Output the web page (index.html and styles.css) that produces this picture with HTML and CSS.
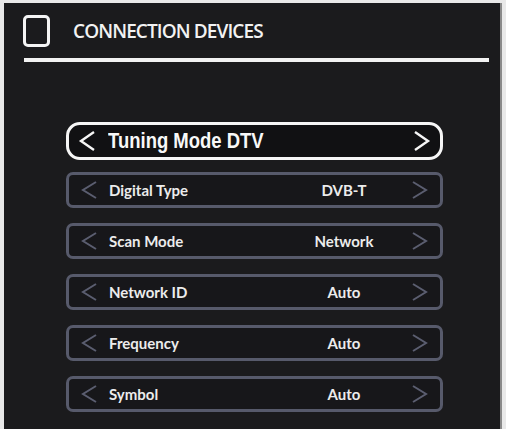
FILE: index.html
```html
<!DOCTYPE html>
<html>
  <head>
    <meta charset="utf-8" />
    <title>Connection Devices</title>
    <link rel="stylesheet" href="styles.css">
  </head>
  <body>
    <div class="panel">
      <div class="head">
        <span class="box"></span>
        <span class="title">CONNECTION DEVICES</span>
      </div>
      <div class="rule"></div>

      <div class="menu">
        <div class="row active">
          <svg class="arr" viewBox="0 0 18 20"><polyline points="16,1 3,10 16,19" /></svg>
          <span class="label">Tuning Mode DTV</span>
          <svg class="arr" viewBox="0 0 18 20"><polyline points="2,1 15,10 2,19" /></svg>
        </div>
        <div class="row">
          <svg class="arr" viewBox="0 0 18 20"><polyline points="16,2 3,10 16,18" /></svg>
          <span class="label">Digital Type</span>
          <span class="value">DVB-T</span>
          <svg class="arr" viewBox="0 0 18 20"><polyline points="2,2 15,10 2,18" /></svg>
        </div>
        <div class="row">
          <svg class="arr" viewBox="0 0 18 20"><polyline points="16,2 3,10 16,18" /></svg>
          <span class="label">Scan Mode</span>
          <span class="value">Network</span>
          <svg class="arr" viewBox="0 0 18 20"><polyline points="2,2 15,10 2,18" /></svg>
        </div>
        <div class="row">
          <svg class="arr" viewBox="0 0 18 20"><polyline points="16,2 3,10 16,18" /></svg>
          <span class="label">Network ID</span>
          <span class="value">Auto</span>
          <svg class="arr" viewBox="0 0 18 20"><polyline points="2,2 15,10 2,18" /></svg>
        </div>
        <div class="row">
          <svg class="arr" viewBox="0 0 18 20"><polyline points="16,2 3,10 16,18" /></svg>
          <span class="label">Frequency</span>
          <span class="value">Auto</span>
          <svg class="arr" viewBox="0 0 18 20"><polyline points="2,2 15,10 2,18" /></svg>
        </div>
        <div class="row">
          <svg class="arr" viewBox="0 0 18 20"><polyline points="16,2 3,10 16,18" /></svg>
          <span class="label">Symbol</span>
          <span class="value">Auto</span>
          <svg class="arr" viewBox="0 0 18 20"><polyline points="2,2 15,10 2,18" /></svg>
        </div>
      </div>
    </div>
  </body>
</html>
```

FILE: styles.css
```css
html,
body {
  width: 100%;
  height: 100%;
  margin: 0;
  padding: 0;
}
body {
  background: #e9e9e9;
  overflow: hidden;
}
.panel {
  margin: 3px 4px 0 4px;
  height: 426px;
  background: #1b1b1d;
  border-right: 2px solid #8a8a8a;
  box-sizing: border-box;
  font-family: "Open Sans", "Liberation Sans", sans-serif;
  color: #f2f2f2;
}
.head {
  display: flex;
  align-items: center;
  padding: 11px 0 0 19px;
  height: 33px;
}
.box {
  width: 21px;
  height: 26px;
  border: 3px solid #f4f4f4;
  border-radius: 5px;
}
.title {
  margin-left: 23px;
  font-size: 19px;
  font-weight: 600;
  letter-spacing: -0.9px;
}
.rule {
  margin: 11px 0 0 20px;
  width: 465px;
  height: 4px;
  background: #f2f2f2;
}
.menu {
  display: flex;
  flex-direction: column;
  gap: 15px;
  margin: 60px 0 0 62px;
  width: 377px;
}
.row {
  display: flex;
  align-items: center;
  height: 36px;
  border: 3px solid #575a6b;
  border-radius: 7px;
  box-sizing: border-box;
  padding: 0 11px 0 11px;
  background: #17171a;
  font-family: Lato, "DejaVu Sans", sans-serif;
  font-weight: bold;
  font-size: 15px;
  color: #ececec;
}
.row.active {
  height: 38px;
  border: 3px solid #f6f6f6;
  border-radius: 14px;
  margin-bottom: -3px;
  background: #111113;
  font-family: "Liberation Sans", sans-serif;
  font-size: 22px;
  color: #f8f8f8;
  padding: 0 9px 0 9px;
}
.arr {
  width: 18px;
  height: 20px;
  flex: none;
  fill: none;
  stroke: #5b5e70;
  stroke-width: 2;
}
.active .arr {
  height: 22px;
  stroke: #f6f6f6;
  stroke-width: 2.4;
}
.label {
  margin-left: 11px;
  width: 190px;
}
.active .label {
  flex: 1;
  margin-left: 12px;
  transform: scaleX(0.84);
  transform-origin: left center;
}
.value {
  width: 90px;
  text-align: center;
  flex: none;
}
.row .arr:last-child {
  margin-left: auto;
}
```
